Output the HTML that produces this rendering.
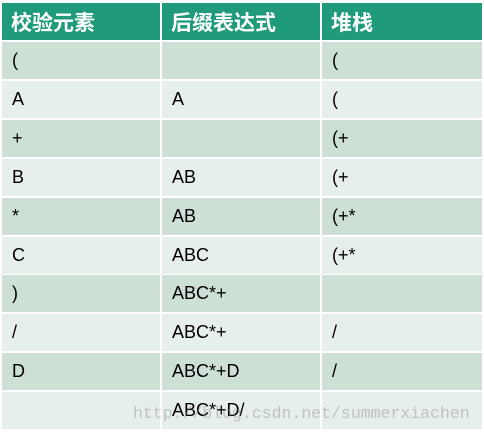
<!DOCTYPE html><html><head><meta charset="utf-8"><style>
body{margin:0;width:484px;height:440px;background:#fff;position:relative;overflow:hidden;font-family:"Liberation Sans","Noto Sans CJK SC",sans-serif}
.c{position:absolute;box-sizing:border-box;padding-left:10px;display:flex;align-items:center;font-size:18px;color:#000}
.h{background:#1f9a7a;color:#fff;font-size:21px;font-weight:bold;padding-left:9px}
.o{background:#cedfd6}.e{background:#e7efeb}
.wm{position:absolute;left:133px;top:404px;font-family:"Liberation Mono","DejaVu Sans Mono",monospace;font-size:16.5px;color:rgba(150,150,150,.5)}
</style></head><body>
<div class="c h" style="left:2px;top:3px;width:158px;height:37px">校验元素</div>
<div class="c h" style="left:162px;top:3px;width:158px;height:37px">后缀表达式</div>
<div class="c h" style="left:322px;top:3px;width:160px;height:37px">堆栈</div>
<div id="rows"></div>
<script>
var d=[["(","","("],["A","A","("],["+","","(+"],["B","AB","(+"],["*","AB","(+*"],["C","ABC","(+*"],[")","ABC*+",""],["/","ABC*+","/"],["D","ABC*+D","/"],["","ABC*+D/",""]];
var h="",L=[2,162,322],W=[158,158,160];
for(var i=0;i<10;i++){var t=42+i*38.9;for(var j=0;j<3;j++)h+='<div class="c '+(i%2?'e':'o')+'" style="left:'+L[j]+'px;top:'+t+'px;width:'+W[j]+'px;height:37px">'+d[i][j]+'</div>';}
document.getElementById('rows').innerHTML=h;
</script>
<div class="wm">http://blog.csdn.net/summerxiachen</div>
</body></html>
